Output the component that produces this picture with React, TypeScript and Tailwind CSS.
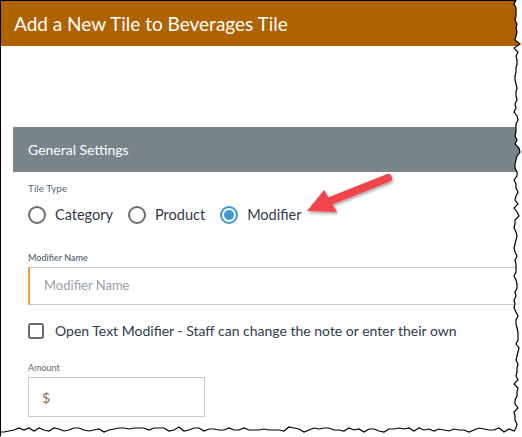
import React from "react";

// Jagged "torn paper" outline along the right and bottom edges.
function tornPath(): { fill: string; line: string } {
  let seed = 7;
  const rnd = () => {
    seed = (seed * 9301 + 49297) % 233280;
    return seed / 233280;
  };
  const pts: [number, number][] = [];
  // right edge, top to bottom
  for (let y = 0; y <= 428; y += 4) {
    const x = 516 + Math.round((rnd() - 0.5) * 4) + (rnd() > 0.85 ? 2 : 0);
    pts.push([x, y]);
  }
  // bottom edge, right to left
  for (let x = 514; x >= 0; x -= 5) {
    const y = 430 + Math.round((rnd() - 0.5) * 4) - (rnd() > 0.85 ? 2 : 0);
    pts.push([x, y]);
  }
  const edge = pts.map((p) => p.join(" ")).join(" L");
  const fill = `M522 0 L${edge} L0 437 L522 437 Z`;
  return { fill, line: "M" + edge + " L0 " + pts[pts.length - 1][1] };
}

const torn = tornPath();

function Radio({ label, checked }: { label: string; checked?: boolean }) {
  return (
    <label className="flex items-center gap-[9px]">
      <span
        className={
          "flex h-[18px] w-[18px] items-center justify-center rounded-full border-2 " +
          (checked ? "border-[#3e98d8]" : "border-[#6d6d6d]")
        }
      >
        {checked && <span className="h-[10px] w-[10px] rounded-full bg-[#3e98d8]" />}
      </span>
      <span className="text-[14.5px] leading-[20px] text-[#2f3b4a]">{label}</span>
    </label>
  );
}

export default function App() {
  return (
    <div
      className="relative h-[437px] w-[522px] overflow-hidden bg-white"
      style={{ fontFamily: "Lato, 'Open Sans', Arial, sans-serif" }}
    >
      <div className="flex h-full flex-col border-l-[1.5px] border-t border-black">
        <div className="flex h-[45px] items-center bg-[#af6200] pl-[13px] pt-[2px] text-[19px] text-white">
          Add a New Tile to Beverages Tile
        </div>

        <div className="h-[81px]" />

        <div className="ml-[12px] flex h-[45px] items-center bg-[#78838a] pl-[15px] text-[14px] text-white">
          General Settings
        </div>

        <div className="flex flex-col pl-[27px]">
          <div className="mt-[10px] text-[10px] leading-[12px] text-[#5e6a75]">Tile Type</div>
          <div className="mt-[11px] flex items-center gap-[15px]">
            <Radio label="Category" />
            <Radio label="Product" />
            <Radio label="Modifier" checked />
          </div>

          <div className="mt-[27px] text-[9px] font-semibold leading-[12px] text-[#5e6a75]">
            Modifier Name
          </div>
          <div className="mt-[3px] flex h-[38px] items-center border border-l-2 border-[#c9c9c9] border-l-[#f0a032] pl-[14px] text-[13px] text-[#9aa0a6]">
            Modifier Name
          </div>

          <label className="mt-[17px] flex items-center gap-[11px]">
            <span className="h-[16px] w-[16px] rounded-[3px] border-2 border-[#6d6d6d]" />
            <span className="text-[14px] leading-[18px] text-[#2f3b4a]">
              Open Text Modifier - Staff can change the note or enter their own
            </span>
          </label>

          <div className="mt-[22px] text-[9px] leading-[12px] text-[#5e6a75]">Amount</div>
          <div className="mt-[3px] flex h-[40px] w-[177px] items-center border border-[#c9c9c9] pl-[13px] text-[14px] text-[#8c6f5a]">
            $
          </div>
        </div>
      </div>

      {/* Callout arrow */}
      <svg className="pointer-events-none absolute left-0 top-0" width="522" height="437">
        <defs>
          <filter id="arrowShadow" x="-20%" y="-20%" width="140%" height="140%">
            <feDropShadow dx="1" dy="2" stdDeviation="1.5" floodColor="#000" floodOpacity="0.35" />
          </filter>
        </defs>
        <g filter="url(#arrowShadow)">
          <line x1="388" y1="178" x2="330" y2="201" stroke="#f2444c" strokeWidth="8" strokeLinecap="round" />
          <polygon points="307,211 324,190 337,212" fill="#f2444c" />
        </g>
      </svg>

      {/* Torn edge */}
      <svg className="pointer-events-none absolute left-0 top-0" width="522" height="437">
        <path d={torn.fill} fill="#fff" />
        <path d={torn.line} fill="none" stroke="#000" strokeWidth="1.2" />
      </svg>
    </div>
  );
}
